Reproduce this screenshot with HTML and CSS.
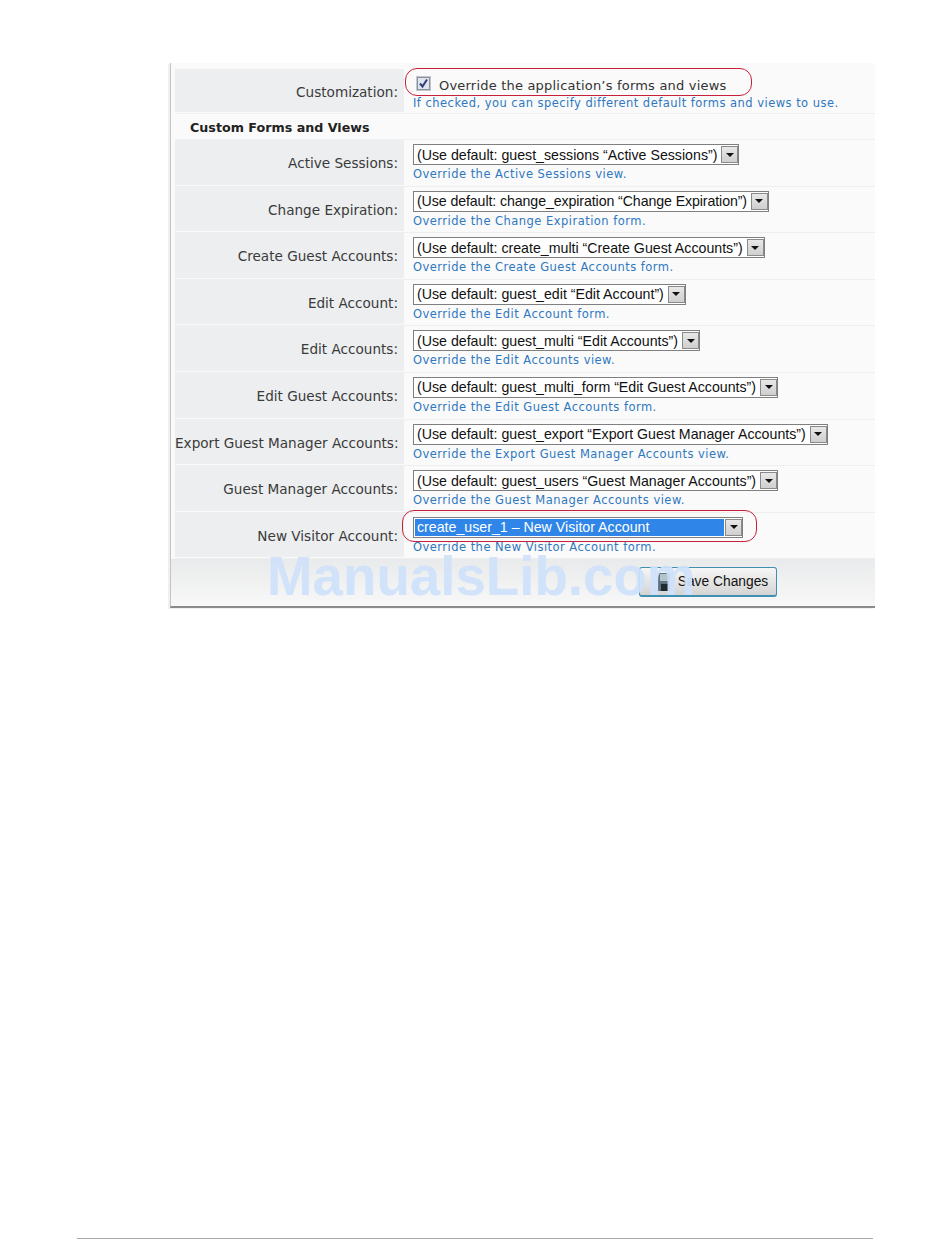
FILE: index.html
```html
<!DOCTYPE html>
<html lang="en">
<head>
    <meta charset="UTF-8">
    <meta name="viewport" content="width=device-width, initial-scale=1.0">
    <title>Custom Forms and Views</title>
    <link rel="stylesheet" href="styles.css">
</head>
<body>
    <div class="frame">
        <div class="row row-first">
            <div class="label">Customization:</div>
            <div class="field">
                <div class="check-line">
                    <span class="checkbox">
                        <svg width="11" height="11" viewBox="0 0 11 11"><path d="M2 5.5 L4.5 8.5 L9 1.5" fill="none" stroke="#2f3f78" stroke-width="2"/></svg>
                    </span>
                    <span>Override the application’s forms and views</span>
                </div>
                <div class="hint">If checked, you can specify different default forms and views to use.</div>
                <div class="oval oval-check"></div>
            </div>
        </div>

        <div class="heading">Custom Forms and Views</div>

        <div class="row">
            <div class="label">Active Sessions:</div>
            <div class="field">
                <div class="select"><span class="select-text">(Use default: guest_sessions “Active Sessions”)</span><span class="arrow"></span></div>
                <div class="hint">Override the Active Sessions view.</div>
            </div>
        </div>
        <div class="row">
            <div class="label">Change Expiration:</div>
            <div class="field">
                <div class="select select-tight"><span class="select-text">(Use default: change_expiration “Change Expiration”)</span><span class="arrow"></span></div>
                <div class="hint">Override the Change Expiration form.</div>
            </div>
        </div>
        <div class="row">
            <div class="label">Create Guest Accounts:</div>
            <div class="field">
                <div class="select"><span class="select-text">(Use default: create_multi “Create Guest Accounts”)</span><span class="arrow"></span></div>
                <div class="hint">Override the Create Guest Accounts form.</div>
            </div>
        </div>
        <div class="row">
            <div class="label">Edit Account:</div>
            <div class="field">
                <div class="select"><span class="select-text">(Use default: guest_edit “Edit Account”)</span><span class="arrow"></span></div>
                <div class="hint">Override the Edit Account form.</div>
            </div>
        </div>
        <div class="row">
            <div class="label">Edit Accounts:</div>
            <div class="field">
                <div class="select"><span class="select-text">(Use default: guest_multi “Edit Accounts”)</span><span class="arrow"></span></div>
                <div class="hint">Override the Edit Accounts view.</div>
            </div>
        </div>
        <div class="row">
            <div class="label">Edit Guest Accounts:</div>
            <div class="field">
                <div class="select"><span class="select-text">(Use default: guest_multi_form “Edit Guest Accounts”)</span><span class="arrow"></span></div>
                <div class="hint">Override the Edit Guest Accounts form.</div>
            </div>
        </div>
        <div class="row">
            <div class="label">Export Guest Manager Accounts:</div>
            <div class="field">
                <div class="select"><span class="select-text">(Use default: guest_export “Export Guest Manager Accounts”)</span><span class="arrow"></span></div>
                <div class="hint">Override the Export Guest Manager Accounts view.</div>
            </div>
        </div>
        <div class="row">
            <div class="label">Guest Manager Accounts:</div>
            <div class="field">
                <div class="select"><span class="select-text">(Use default: guest_users “Guest Manager Accounts”)</span><span class="arrow"></span></div>
                <div class="hint">Override the Guest Manager Accounts view.</div>
            </div>
        </div>
        <div class="row">
            <div class="label">New Visitor Account:</div>
            <div class="field">
                <div class="select select-picked"><span class="select-text">create_user_1 – New Visitor Account</span><span class="arrow"></span></div>
                <div class="hint">Override the New Visitor Account form.</div>
                <div class="oval oval-select"></div>
            </div>
        </div>

        <div class="actions">
            <button class="save-button">
                <svg class="save-icon" width="12" height="18" viewBox="0 0 12 18">
                    <rect x="0" y="0" width="12" height="18" fill="#5f7480"/>
                    <rect x="2" y="1" width="8" height="7" fill="#b4c4cc"/>
                    <rect x="3" y="11" width="7" height="7" fill="#1f2a30"/>
                </svg>
                Save Changes
            </button>
        </div>
    </div>

    <div class="watermark">ManualsLib.com</div>

    <div class="page-rule"></div>
</body>
</html>
```

FILE: styles.css
```css
body {
    margin: 0;
    background-color: #fff;
    height: 1260px;
    position: relative;
    overflow: hidden;
    font-family: 'DejaVu Sans', sans-serif;
    color: #333;
}

.frame {
    width: 700px;
    margin-left: 170px;
    padding: 6px 0 0 4px;
    position: relative;
    top: 63px;
    background-color: #fafafa;
    border-left: 1px solid #c4c4c4;
    border-bottom: 2px solid #8a8a8a;
    box-shadow: -2px 1px 0 #f0f0f0;
}

.row {
    display: flex;
    height: 45.6px;
    border-bottom: 1px solid #eee;
}

.row-first {
    height: 44px;
}

.label {
    width: 223px;
    padding-right: 6px;
    margin-bottom: 1px;
    background-color: #eceeef;
    text-align: right;
    font-size: 13.6px;
    line-height: 46px;
    color: #3a3a3a;
    white-space: nowrap;
}

.field {
    flex: 1;
    padding: 4px 0 0 9px;
    position: relative;
}

.heading {
    height: 25px;
    line-height: 28px;
    padding-left: 15px;
    font-size: 12.7px;
    font-weight: bold;
    color: #222;
    border-bottom: 1px solid #eee;
}

.check-line {
    display: flex;
    align-items: center;
    gap: 9px;
    margin-top: 2px;
    padding-left: 4px;
    height: 20px;
    font-size: 13px;
    letter-spacing: 0.2px;
}

.check-line + .hint {
    margin-top: 0;
}

.checkbox {
    width: 11px;
    height: 11px;
    margin-bottom: 3px;
    border: 1px solid #8a8f9c;
    outline: 1px solid #c4c6cc;
    background-color: #dfe3ee;
    display: flex;
}

.hint {
    font-size: 11.5px;
    line-height: 16px;
    letter-spacing: 0.47px;
    color: #2f78c0;
    margin-top: 1px;
}

.select {
    display: inline-flex;
    align-items: center;
    vertical-align: top;
    height: 19px;
    border: 1px solid #7f7f7f;
    background-color: #fff;
    font-family: 'Liberation Sans', sans-serif;
    font-size: 14.2px;
    color: #111;
}

.select-tight .select-text {
    letter-spacing: -0.1px;
}

.select-text {
    padding: 0 3px;
    white-space: nowrap;
}

.arrow {
    width: 17px;
    height: 17px;
    margin-left: 1px;
    background: linear-gradient(#e8e8e8, #cfcfcf);
    border: 1px solid #8a8a8a;
    box-sizing: border-box;
    display: flex;
    align-items: center;
    justify-content: center;
}

.arrow::after {
    content: "";
    border: 4px solid transparent;
    border-top: 4px solid #111;
    border-bottom: 0;
}

.select-picked {
    width: 328px;
}

.select-picked .select-text {
    flex: 1;
    background-color: #2f86e8;
    color: #fff;
    line-height: 17px;
    margin: 0 0 0 1px;
    padding-left: 2px;
}

.oval {
    position: absolute;
    border: 1px solid #c8203c;
    border-radius: 12px;
}

.oval-check {
    left: 1px;
    top: -1px;
    width: 345px;
    height: 26px;
}

.oval-select {
    left: -2px;
    top: -3px;
    width: 353px;
    height: 30px;
}

.actions {
    height: 47px;
    margin-left: -4px;
    background: linear-gradient(#e9eaeb, #f8f8f8);
    display: flex;
    padding-left: 468px;
    padding-top: 8px;
    box-sizing: border-box;
}

.save-button {
    width: 138px;
    height: 30px;
    display: flex;
    align-items: center;
    justify-content: center;
    gap: 8px;
    padding: 0 0 0 10px;
    background: linear-gradient(#f6f6f6, #d4d4d4);
    border: 1px solid #3f8fb0;
    border-bottom: 2px solid #3f8fb0;
    border-radius: 3px;
    font-family: 'Liberation Sans', sans-serif;
    font-size: 13.8px;
    color: #111;
}

.watermark {
    position: absolute;
    left: 267px;
    top: 544px;
    font-family: 'Liberation Sans', sans-serif;
    font-size: 54.7px;
    font-weight: bold;
    color: #cfe2fb;
    opacity: 0.92;
    white-space: nowrap;
}

.page-rule {
    position: absolute;
    left: 77px;
    top: 1238px;
    width: 796px;
    height: 1px;
    background-color: #aaa;
}
```
